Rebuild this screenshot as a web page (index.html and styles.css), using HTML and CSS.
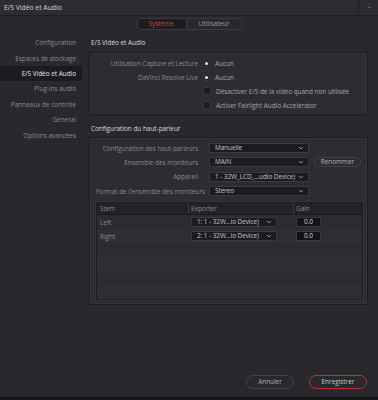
FILE: index.html
```html
<!DOCTYPE html>
<html lang="fr">
<head>
  <meta charset="UTF-8" />
  <meta name="viewport" content="width=device-width, initial-scale=1.0"/>
  <title>E/S Vidéo et Audio</title>
  <link rel="stylesheet" href="styles.css">
</head>
<body>
  <div class="window">
    <div class="titlebar">
      <span class="title">E/S Vidéo et Audio</span>
      <span class="more">···</span>
    </div>

    <div class="tabs">
      <div class="tab active">Système</div>
      <div class="tab">Utilisateur</div>
    </div>

    <div class="content">
      <ul class="sidebar">
        <li>Configuration</li>
        <li>Espaces de stockage</li>
        <li class="selected">E/S Vidéo et Audio</li>
        <li>Plug-ins audio</li>
        <li>Panneaux de contrôle</li>
        <li>General</li>
        <li>Options avancées</li>
      </ul>

      <div class="main">
        <div class="section-title">E/S Vidéo et Audio</div>
        <div class="box box-io">
          <div class="row">
            <span class="label">Utilisation Capture et Lecture</span>
            <span class="radio"></span>
            <span class="value">Aucun</span>
          </div>
          <div class="row">
            <span class="label">DaVinci Resolve Live</span>
            <span class="radio"></span>
            <span class="value">Aucun</span>
          </div>
          <div class="row">
            <span class="label"></span>
            <span class="check"></span>
            <span class="value">Désactiver E/S de la vidéo quand non utilisée</span>
          </div>
          <div class="row">
            <span class="label"></span>
            <span class="check"></span>
            <span class="value">Activer Fairlight Audio Accelerator</span>
          </div>
        </div>

        <div class="section-title second">Configuration du haut-parleur</div>
        <div class="box box-speaker">
          <div class="row wide">
            <span class="label">Configuration des haut-parleurs</span>
            <div class="select">Manuelle<svg viewBox="0 0 6 4"><path d="M1 1l2 2 2-2"/></svg></div>
          </div>
          <div class="row wide">
            <span class="label">Ensemble des moniteurs</span>
            <div class="select">MAIN<svg viewBox="0 0 6 4"><path d="M1 1l2 2 2-2"/></svg></div>
            <div class="btn-small">Renommer</div>
          </div>
          <div class="row wide">
            <span class="label">Appareil</span>
            <div class="select">1 - 32W_LCD_...udio Device)<svg viewBox="0 0 6 4"><path d="M1 1l2 2 2-2"/></svg></div>
          </div>
          <div class="row wide">
            <span class="label">Format de l'ensemble des moniteurs</span>
            <div class="select">Stereo<svg viewBox="0 0 6 4"><path d="M1 1l2 2 2-2"/></svg></div>
          </div>

          <div class="table">
            <div class="thead">
              <div class="c1">Stem</div>
              <div class="c2">Exporter</div>
              <div class="c3">Gain</div>
            </div>
            <div class="tr">
              <div class="c1">Left</div>
              <div class="c2"><div class="select small">1: 1 - 32W...io Device)<svg viewBox="0 0 6 4"><path d="M1 1l2 2 2-2"/></svg></div></div>
              <div class="c3"><div class="gain">0.0</div></div>
            </div>
            <div class="tr odd">
              <div class="c1">Right</div>
              <div class="c2"><div class="select small">2: 1 - 32W...io Device)<svg viewBox="0 0 6 4"><path d="M1 1l2 2 2-2"/></svg></div></div>
              <div class="c3"><div class="gain">0.0</div></div>
            </div>
            <div class="tr"></div>
            <div class="tr odd"></div>
            <div class="tr"></div>
            <div class="tr odd"></div>
          </div>
        </div>
      </div>
    </div>

    <div class="footer">
      <div class="btn">Annuler</div>
      <div class="btn primary">Enregistrer</div>
    </div>
  </div>
</body>
</html>
```

FILE: styles.css
```css
html, body {
  margin: 0;
  padding: 0;
  background: #1a1a1d;
}

body {
  font-family: "Open Sans", "DejaVu Sans", sans-serif;
  font-size: 6.4px;
  color: #8b8b90;
}

.window {
  width: 378px;
  height: 397px;
  background: #28282d;
  border-bottom: 1px solid #151517;
  display: flex;
  flex-direction: column;
  overflow: hidden;
}

.titlebar {
  height: 16px;
  box-sizing: border-box;
  background: #2c2c32;
  border-bottom: 1px solid #1e1e22;
  display: flex;
  align-items: center;
  justify-content: space-between;
  flex-shrink: 0;
}

.title {
  padding-left: 4px;
  color: #d6d6d8;
  font-size: 6.8px;
}

.more {
  width: 19px;
  height: 15px;
  line-height: 14px;
  border-left: 1px solid #1e1e22;
  text-align: center;
  color: #8a8a8e;
  font-size: 8px;
  letter-spacing: -1px;
}

.tabs {
  margin: 2px auto 0;
  display: flex;
  border: 1px solid #3b3b41;
  border-radius: 7px;
  height: 12px;
  box-sizing: border-box;
  overflow: hidden;
  flex-shrink: 0;
}

.tab {
  line-height: 10px;
  text-align: center;
  color: #9a9a9e;
  width: 55px;
}

.tab.active {
  width: 49px;
  background: #1d1d21;
  color: #d23c3c;
  border-right: 1px solid #3b3b41;
}

.content {
  flex: 1;
  display: flex;
}

.sidebar {
  list-style: none;
  margin: 0;
  padding: 5.3px 0 0;
  width: 82px;
  flex-shrink: 0;
}

.sidebar li {
  height: 15.4px;
  line-height: 15.4px;
  text-align: right;
  padding-right: 6px;
  white-space: nowrap;
}

.sidebar li.selected {
  background: #1c1c20;
  color: #e8e8ea;
}

.main {
  margin-left: 7px;
  width: 279px;
  padding-top: 8px;
}

.section-title {
  height: 10px;
  line-height: 10px;
  padding-left: 2px;
  margin-bottom: 4px;
  color: #dcdcde;
}

.section-title.second {
  margin-top: 9px;
  margin-bottom: 3px;
}

.box {
  background: #2c2c31;
  border: 1px solid #1b1b1e;
  box-shadow: inset 0 0 0 1px #34343a;
  box-sizing: border-box;
}

.box-io {
  height: 63px;
  padding-top: 3px;
}

.box-speaker {
  height: 168px;
  padding: 3px 4px 0 6px;
}

.row {
  height: 14px;
  display: flex;
  align-items: center;
}

.row.wide {
  height: 14.3px;
}

.label {
  width: 108px;
  text-align: right;
  white-space: nowrap;
  flex-shrink: 0;
}

.box-speaker .label {
  width: 102px;
}

.radio {
  margin-left: 5px;
  width: 7px;
  height: 7px;
  border-radius: 50%;
  background: #1a1a1d;
  border: 0.5px solid #3c3c42;
  box-sizing: border-box;
  display: flex;
  align-items: center;
  justify-content: center;
}

.radio::after {
  content: "";
  width: 3px;
  height: 3px;
  border-radius: 50%;
  background: #f0f0f0;
}

.check {
  margin-left: 5px;
  width: 8px;
  height: 8px;
  background: #1d1d21;
  border: 1px solid #38383e;
  box-sizing: border-box;
  border-radius: 1px;
}

.value {
  margin-left: 5px;
  white-space: nowrap;
}

.box-io .value {
  color: #a8a8ac;
}

.select {
  margin-left: 11px;
  width: 100px;
  height: 10px;
  box-sizing: border-box;
  background: #1c1c20;
  border: 1px solid #3a3a40;
  border-radius: 1px;
  padding-left: 5px;
  color: #c4c4c8;
  line-height: 8px;
  display: flex;
  align-items: center;
  justify-content: space-between;
  white-space: nowrap;
  letter-spacing: -0.05px;
}

.select svg {
  width: 6px;
  height: 4px;
  margin: 0 4px 0 2px;
  flex-shrink: 0;
  fill: none;
  stroke: #9a9a9e;
  stroke-width: 0.9;
}

.select.small {
  margin-left: 0;
  width: 86px;
  height: 9.5px;
  padding-left: 5px;
}

.btn-small {
  margin-left: 5px;
  width: 47px;
  height: 10px;
  box-sizing: border-box;
  border: 1px solid #404046;
  border-radius: 5px;
  text-align: center;
  line-height: 8px;
  color: #b4b4b8;
}

.table {
  margin-top: 4px;
  height: 96px;
  border: 1px solid #1e1e22;
  box-shadow: 0 0 0 1px #34343a;
  overflow: hidden;
}

.thead, .tr {
  display: flex;
  align-items: center;
}

.thead {
  height: 11px;
  background: #222226;
  border-bottom: 1px solid #1a1a1d;
}

.tr {
  height: 14px;
  background: #2b2b30;
}

.tr.odd {
  background: #2e2e33;
}

.c1 {
  width: 92px;
  padding-left: 3px;
  box-sizing: border-box;
}

.c2 {
  width: 105px;
  padding-left: 2px;
  box-sizing: border-box;
}

.c3 {
  flex: 1;
  padding-left: 2px;
}

.thead .c1, .thead .c2 {
  border-right: 1px solid #3a3a40;
  height: 11px;
  line-height: 11px;
}

.thead .c3 {
  line-height: 11px;
}

.gain {
  width: 25px;
  height: 10px;
  box-sizing: border-box;
  background: #141416;
  border: 1px solid #3a3a40;
  border-radius: 1px;
  text-align: center;
  line-height: 8px;
  color: #d4d4d6;
}

.footer {
  height: 22px;
  display: flex;
  justify-content: flex-end;
  align-items: flex-start;
  gap: 15px;
  padding-right: 11px;
  flex-shrink: 0;
}

.btn {
  width: 48px;
  height: 14px;
  box-sizing: border-box;
  border: 1px solid #414147;
  border-radius: 7px;
  text-align: center;
  line-height: 12px;
  color: #b0b0b4;
}

.btn.primary {
  width: 58px;
  border-color: #b83434;
  color: #c8c8cc;
}
```
